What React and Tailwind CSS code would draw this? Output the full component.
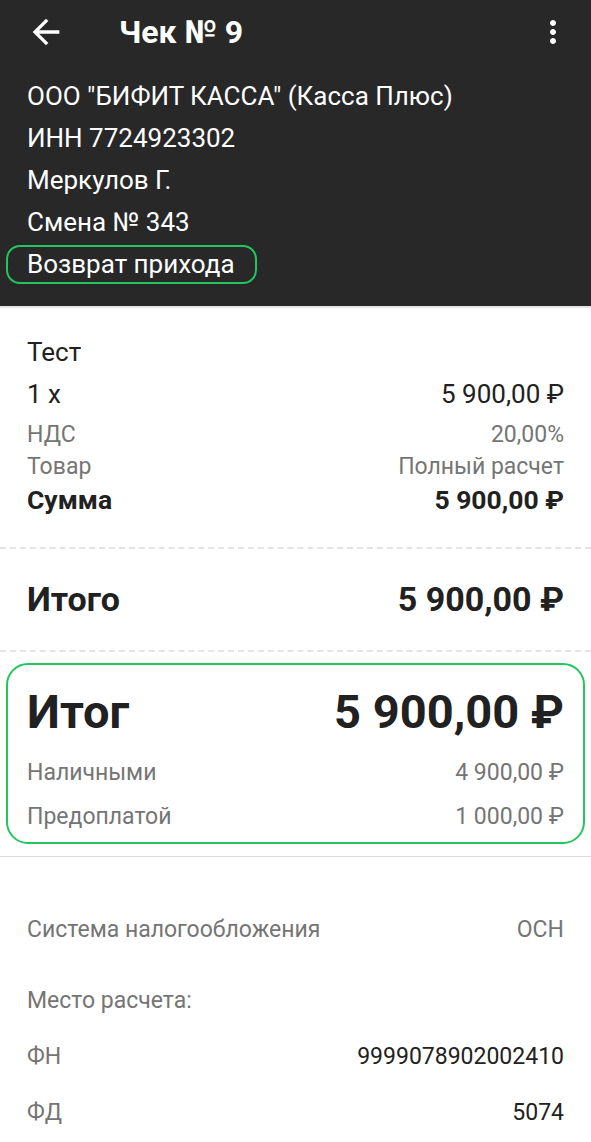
const font = { fontFamily: 'Roboto, "Noto Sans", sans-serif' }

function Row({ left, right, className = '', leftClass = '', rightClass = '' }) {
  return (
    <div className={`flex items-center justify-between ${className}`}>
      <span className={leftClass}>{left}</span>
      <span className={rightClass}>{right}</span>
    </div>
  )
}

export default function App() {
  return (
    <div className="w-[591px] min-h-[1142px] bg-white text-[#212121]" style={font}>
      {/* header */}
      <div className="bg-[#282828] text-white pb-[21px]">
        <div className="h-[64px] flex items-center">
          <svg viewBox="0 0 24 24" className="w-[40px] h-[40px] ml-[26px] fill-white">
            <path d="M20 11H7.83l5.59-5.59L12 4l-8 8 8 8 1.41-1.41L7.83 13H20v-2z" />
          </svg>
          <h1 className="ml-[53px] text-[32px] font-bold">Чек № 9</h1>
          <svg viewBox="0 0 24 24" className="w-[36px] h-[36px] ml-auto mr-[20px] fill-white">
            <path d="M12 8c1.1 0 2-.9 2-2s-.9-2-2-2-2 .9-2 2 .9 2 2 2zm0 2c-1.1 0-2 .9-2 2s.9 2 2 2 2-.9 2-2-.9-2-2-2zm0 6c-1.1 0-2 .9-2 2s.9 2 2 2 2-.9 2-2-.9-2-2-2z" />
          </svg>
        </div>
        <div className="pt-[11px] px-[27px] text-[26px]">
          <div className="h-[42px] flex items-center">ООО "БИФИТ КАССА" (Касса Плюс)</div>
          <div className="h-[42px] flex items-center">ИНН 7724923302</div>
          <div className="h-[42px] flex items-center">Меркулов Г.</div>
          <div className="h-[42px] flex items-center">Смена № 343</div>
          <div className="h-[42px] flex items-center">
            <span className="-ml-[21px] h-[39px] flex items-center pl-[19px] pr-[20px] border-2 border-[#22c55e] rounded-[14px]">
              Возврат прихода
            </span>
          </div>
        </div>
      </div>
      <div className="h-[2px] bg-[#e6e6e6]" />

      {/* item */}
      <div className="px-[27px] pt-[23px] pb-[30px]">
        <div className="h-[42px] flex items-center text-[26px]">Тест</div>
        <Row className="h-[42px] text-[26px]" left="1 x" right="5 900,00 ₽" />
        <Row className="h-[32px] mt-[4px] text-[23px] text-[#757575]" left="НДС" right="20,00%" />
        <Row className="h-[32px] text-[23px] text-[#757575]" left="Товар" right="Полный расчет" />
        <Row className="h-[34px] text-[26.5px] font-bold" left="Сумма" right="5 900,00 ₽" />
      </div>
      <div className="border-t-2 border-dashed border-[#e4e4e4]" />

      <Row className="h-[101px] px-[27px] text-[34px] font-bold" left="Итого" right="5 900,00 ₽" />
      <div className="border-t-2 border-dashed border-[#e4e4e4]" />

      {/* totals */}
      <div className="mx-[6px] mt-[11px] mb-[12px] border-2 border-[#22c55e] rounded-[22px] px-[19px] pt-[22px] pb-[3px]">
        <Row className="h-[50px] text-[47px] font-bold mb-[14px]" left="Итог" right="5 900,00 ₽" />
        <Row className="h-[44px] text-[23px] text-[#757575]" left="Наличными" right="4 900,00 ₽" />
        <Row className="h-[44px] text-[23px] text-[#757575]" left="Предоплатой" right="1 000,00 ₽" />
      </div>
      <div className="h-[1px] bg-[#dcdcdc]" />

      {/* fiscal */}
      <div className="px-[27px] pt-[45px] text-[23px]">
        <Row className="h-[56px] text-[#757575]" left="Система налогообложения" right="ОСН" />
        <div className="h-[56px] mt-[15px] flex items-center text-[#757575]">Место расчета:</div>
        <Row className="h-[56px]" leftClass="text-[#757575]" left="ФН" right="9999078902002410" />
        <Row className="h-[56px]" leftClass="text-[#757575]" left="ФД" right="5074" />
      </div>
    </div>
  )
}
